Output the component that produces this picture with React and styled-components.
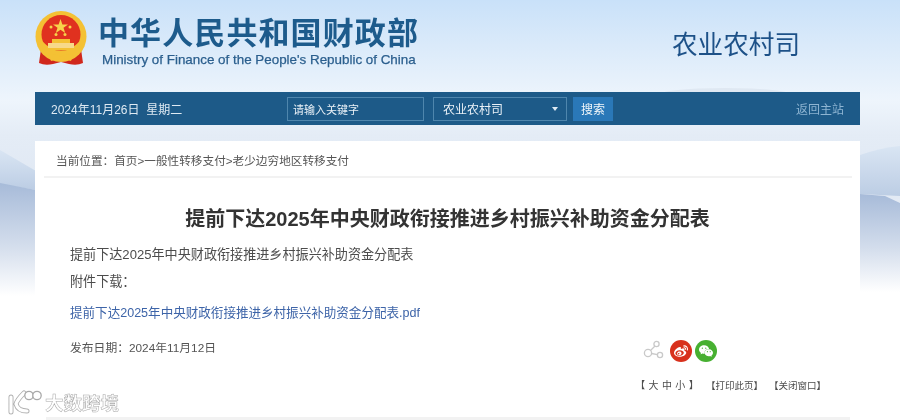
import React from 'react';
import styled, { createGlobalStyle } from 'styled-components';
import { SiSinaweibo, SiWechat } from 'react-icons/si';

const CJK = '"Liberation Sans", "Noto Sans CJK SC", sans-serif';

const Global = createGlobalStyle`
  html, body { margin: 0; padding: 0; background: #fff; }
  body { font-family: ${CJK}; }
  * { box-sizing: border-box; }
`;

const Page = styled.div`
  position: relative;
  width: 900px;
  height: 420px;
  overflow: hidden;
  filter: blur(0.35px);
  background: linear-gradient(180deg, #c9e1f9 0%, #dcebfa 12%, #eef5fc 24%, #e4ecf6 32%, #e0e8f3 45%, #fff 68%);
`;

const Scenery = styled.svg`
  position: absolute;
  inset: 0;
  width: 900px;
  height: 420px;
`;

const Content = styled.div`
  position: relative;
  width: 825px;
  margin-left: 35px;
  display: flex;
  flex-direction: column;
`;

const Header = styled.header`
  height: 92px;
  display: flex;
  align-items: flex-start;
`;

const Emblem = styled.svg`
  width: 52px;
  height: 56px;
  margin-top: 11px;
  flex: none;
`;

const Brand = styled.div`
  margin-left: 11px;
  margin-top: 13px;
  width: 342px;
  flex: none;
`;

const BrandCn = styled.div`
  font: 700 31px/36px "Noto Sans CJK SC", sans-serif;
  letter-spacing: 1.1px;
  color: #1d5b8c;
  white-space: nowrap;
`;

const BrandEn = styled.div`
  margin-top: 2px;
  margin-left: 4px;
  font: 400 13.4px/17px "Liberation Sans", sans-serif;
  -webkit-text-stroke: 0.25px #2b5f8e;
  color: #2b5f8e;
  white-space: nowrap;
`;

const Dept = styled.div`
  margin-left: 232px;
  margin-top: 25px;
  font: 400 25.6px/36px "Noto Sans CJK SC", sans-serif;
  color: #1d5188;
  white-space: nowrap;
`;

const Bar = styled.div`
  height: 33px;
  background: #1d5a88;
  display: flex;
  align-items: center;
  color: #dfeaf3;
  font-size: 12px;
  padding-left: 16px;
`;

const DateText = styled.div`
  width: 236px;
  flex: none;
  white-space: nowrap;
`;

const Field = styled.div`
  height: 24px;
  border: 1px solid #4f86ad;
  display: flex;
  align-items: center;
  justify-content: space-between;
  padding: 0 6px 0 ${p => p.$pad}px;
  width: ${p => p.$w}px;
  margin-left: ${p => p.$ml || 0}px;
  font-size: ${p => p.$fs}px;
  flex: none;
  color: #eaf1f7;
`;

const Caret = styled.span`
  width: 0;
  height: 0;
  margin-right: 2px;
  border-left: 3.5px solid transparent;
  border-right: 3.5px solid transparent;
  border-top: 4px solid #dfeaf3;
`;

const SearchBtn = styled.div`
  width: 40px;
  height: 24px;
  margin-left: 6px;
  background: #2a78b8;
  color: #f1f6fa;
  display: flex;
  align-items: center;
  justify-content: center;
  flex: none;
`;

const HomeLink = styled.div`
  margin-left: auto;
  margin-right: 16px;
  color: #8db4d2;
`;

const Card = styled.main`
  margin-top: 16px;
  height: 276px;
  background: #fff;
  display: flex;
  flex-direction: column;
`;

const Crumbs = styled.nav`
  margin: 0 8px 0 9px;
  height: 37px;
  padding: 11px 0 0 12px;
  font-size: 11.65px;
  line-height: 17px;
  color: #555;
  border-bottom: 2px solid #f2f2f2;
  white-space: nowrap;
`;

const Title = styled.h1`
  margin: 27px 0 0;
  text-align: center;
  font: 700 20px/28px "Liberation Sans", "Noto Sans CJK SC", sans-serif;
  color: #333;
  white-space: nowrap;
`;

const Body = styled.p`
  margin: ${p => p.$mt}px 0 0 35px;
  font-size: 13.1px;
  line-height: 20px;
  color: #4c4c4c;
  white-space: nowrap;
`;

const FileLink = styled.a`
  display: block;
  margin: 11px 0 0 35px;
  font-size: 12.55px;
  line-height: 20px;
  color: #3d64a8;
  white-space: nowrap;
`;

const MetaRow = styled.div`
  margin: 15px 143px 0 35px;
  height: 22px;
  display: flex;
  align-items: flex-start;
  justify-content: space-between;
`;

const Published = styled.div`
  font-size: 11.8px;
  line-height: 20px;
  color: #555;
  white-space: nowrap;
`;

const Share = styled.div`
  margin-top: 2px;
  display: flex;
  align-items: center;
  gap: 3px;
`;

const ShareIcon = styled.svg`
  width: 22px;
  height: 22px;
  margin-right: 2px;
`;

const Round = styled.span`
  width: 22px;
  height: 22px;
  border-radius: 50%;
  background: ${p => p.$bg};
  color: #fff;
  display: flex;
  align-items: center;
  justify-content: center;
  font-size: 14px;
`;

const Tools = styled.div`
  margin: 18px 34px 0 0;
  display: flex;
  justify-content: flex-end;
  align-items: center;
  gap: 6px;
  font-size: 9.5px;
  line-height: 16px;
  color: #4c4c4c;
  white-space: nowrap;
`;

const SizeTool = styled.span`
  font-size: 10px;
  letter-spacing: 0.3px;
  margin-right: 1px;
`;

const BottomBand = styled.div`
  position: absolute;
  left: 46px;
  top: 417px;
  width: 804px;
  height: 3px;
  background: #f2f2f2;
`;

const Watermark = styled.div`
  position: absolute;
  left: 8px;
  top: 389px;
  display: flex;
  align-items: center;
  gap: 3px;
`;

const MarkLogo = styled.svg`
  width: 34px;
  height: 26px;
`;

const MarkText = styled.span`
  font: 700 18.5px/24px "Noto Sans CJK SC", sans-serif;
  color: #fff;
  -webkit-text-stroke: 0.5px #a9a9a9;
  white-space: nowrap;
`;

const Emb = () => (
  <Emblem viewBox="0 0 52 56" aria-hidden="true">
    <path d="M6 38 L4 52 Q10 55 18 53 L26 51 L34 53 Q42 55 48 52 L46 38 Z" fill="#d0281c" />
    <circle cx="26" cy="25.5" r="25.5" fill="#f4c134" />
    <circle cx="26" cy="23.5" r="19.5" fill="#e0311f" />
    <path d="M7 30 Q26 50 45 30 L44 38 Q26 54 8 38 Z" fill="#f4c134" />
    <polygon points="25.5,8 27.4,13.4 33,13.4 28.5,16.8 30.2,22 25.5,18.8 20.8,22 22.5,16.8 18,13.4 23.6,13.4" fill="#f7d24a" />
    <circle cx="16" cy="16" r="1.5" fill="#f7d24a" />
    <circle cx="35" cy="16" r="1.5" fill="#f7d24a" />
    <circle cx="21" cy="23.5" r="1.5" fill="#f7d24a" />
    <circle cx="30" cy="23.5" r="1.5" fill="#f7d24a" />
    <rect x="17" y="28" width="18" height="4" fill="#f4c134" />
    <rect x="13" y="32" width="26" height="5" fill="#f7d98a" />
    <rect x="8" y="37" width="36" height="2.5" fill="#f4c134" />
    <path d="M14 44 Q20 41 26 46 Q32 41 38 44 L36 50 Q30 47 26 50 Q22 47 16 50 Z" fill="#f4c134" />
  </Emblem>
);

export default function App() {
  return (
    <Page>
      <Global />
      <Scenery viewBox="0 0 900 420" aria-hidden="true">
        <defs>
          <linearGradient id="m1" x1="0" y1="0" x2="0" y2="1">
            <stop offset="0" stopColor="#a7bbd9" />
            <stop offset="0.55" stopColor="#d3ddec" />
            <stop offset="1" stopColor="#ffffff" />
          </linearGradient>
          <linearGradient id="m2" x1="0" y1="0" x2="0" y2="1">
            <stop offset="0" stopColor="#d9e5f3" />
            <stop offset="1" stopColor="#bccde4" />
          </linearGradient>
        </defs>
        <path d="M0 150 L36 171 L36 190 L0 184 Z" fill="url(#m2)" />
        <path d="M860 155 Q880 148 900 146 L900 196 L860 194 Z" fill="url(#m2)" />
        <path d="M0 183 L36 190 L36 296 L0 296 Z" fill="url(#m1)" />
        <path d="M860 194 L885 196 L900 203 L900 292 L860 292 Z" fill="url(#m1)" />
        <ellipse cx="725" cy="96" rx="70" ry="8" fill="#dfe8f2" />
      </Scenery>
      <Content>
        <Header>
          <Emb />
          <Brand>
            <BrandCn>中华人民共和国财政部</BrandCn>
            <BrandEn>Ministry of Finance of the People's Republic of China</BrandEn>
          </Brand>
          <Dept>农业农村司</Dept>
        </Header>
        <Bar>
          <DateText>2024年11月26日&nbsp;&nbsp;星期二</DateText>
          <Field $w={137} $pad={5} $fs={11}>请输入关键字</Field>
          <Field $w={134} $ml={9} $pad={9} $fs={12}>农业农村司<Caret /></Field>
          <SearchBtn>搜索</SearchBtn>
          <HomeLink>返回主站</HomeLink>
        </Bar>
        <Card>
          <Crumbs>当前位置：首页&gt;一般性转移支付&gt;老少边穷地区转移支付</Crumbs>
          <Title>提前下达2025年中央财政衔接推进乡村振兴补助资金分配表</Title>
          <Body $mt={12}>提前下达2025年中央财政衔接推进乡村振兴补助资金分配表</Body>
          <Body $mt={7}>附件下载：</Body>
          <FileLink>提前下达2025年中央财政衔接推进乡村振兴补助资金分配表.pdf</FileLink>
          <MetaRow>
            <Published>发布日期：2024年11月12日</Published>
            <Share>
              <ShareIcon viewBox="0 0 22 22" aria-hidden="true">
                <g fill="none" stroke="#c9c9c9" strokeWidth="1.3">
                  <circle cx="13.5" cy="4" r="2.6" />
                  <circle cx="5" cy="13" r="3.6" />
                  <circle cx="17" cy="15" r="2.6" />
                  <path d="M12 6 L7.5 10.5 M8.5 13.5 L14.5 14.7" />
                </g>
              </ShareIcon>
              <Round $bg="#d8301c"><SiSinaweibo /></Round>
              <Round $bg="#47b031"><SiWechat /></Round>
            </Share>
          </MetaRow>
          <Tools>
            <SizeTool>【 大 中 小 】</SizeTool>
            <span>【打印此页】</span>
            <span>【关闭窗口】</span>
          </Tools>
        </Card>
      </Content>
      <BottomBand />
      <Watermark>
        <MarkLogo viewBox="0 0 34 26" aria-hidden="true">
          <g fill="none" strokeLinecap="round" strokeLinejoin="round">
            <path d="M3 8 L3 23 M16 4 Q9 11 8 15 Q10 22 19 22" stroke="#b0b0b0" strokeWidth="5" />
            <path d="M3 8 L3 23 M16 4 Q9 11 8 15 Q10 22 19 22" stroke="#fff" strokeWidth="3.2" />
          </g>
          <g fill="#fff" stroke="#a9a9a9" strokeWidth="1.3">
            <circle cx="21" cy="6.5" r="4.2" />
            <circle cx="29" cy="6.5" r="4.2" />
          </g>
        </MarkLogo>
        <MarkText>大数跨境</MarkText>
      </Watermark>
    </Page>
  );
}
